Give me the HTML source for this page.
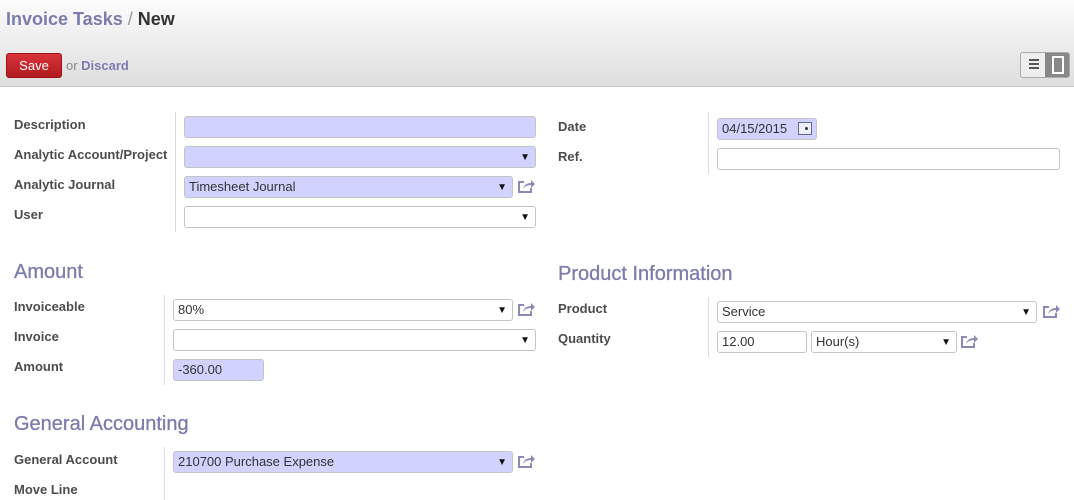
<!DOCTYPE html><html><head><style>
body{margin:0;width:1074px;height:500px;overflow:hidden;background:#fff;font-family:"Liberation Sans",sans-serif;position:relative}
.hdr{position:absolute;left:0;top:0;width:1074px;height:86px;background:linear-gradient(#fcfcfc,#dedede);border-bottom:1px solid #cacaca}
.a{position:absolute}
.lbl{position:absolute;font-size:13px;font-weight:bold;color:#4c4c4c}
.in{position:absolute;height:20px;border:1px solid #c4c4c4;border-radius:3px;background:#fff;font-size:13px;color:#333;line-height:20px;padding-left:4px;box-sizing:content-box}
.req{background:#d2d2ff}
.arr{position:absolute;right:5px;top:1px;font-size:10px;color:#111}
.sep{position:absolute;width:1px;background:#ddd}
.h{position:absolute;font-size:20px;color:#7c7bad;-webkit-text-stroke:0.3px #7c7bad}
.ic{position:absolute;width:18px;height:14px}
</style></head><body>
<div class="hdr"></div>
<div class="a" style="left:6px;top:9px;font-size:18px;font-weight:bold;color:#7c7bad">Invoice Tasks <span style="color:#999;font-weight:normal">/</span> <span style="color:#333">New</span></div>
<div class="a" style="left:6px;top:53px;width:54px;height:23px;background:linear-gradient(#d9343a,#b01a1f);border:1px solid #a01418;border-radius:3px;color:#fff;font-size:13px;line-height:23px;text-align:center">Save</div>
<div class="a" style="left:66px;top:58px;font-size:13px;color:#888">or <b style="color:#7c7bad">Discard</b></div>
<div class="a" style="left:1020px;top:52px;width:48px;height:24px;border:1px solid #aaa;border-radius:3px;background:#eee;overflow:hidden">
<div class="a" style="left:8px;top:6px;width:10px;height:2px;background:#555;box-shadow:0 4px 0 #555,0 8px 0 #555"></div>
<div class="a" style="left:24px;top:0;width:24px;height:24px;background:#888"></div>
<div class="a" style="left:31px;top:3px;width:8px;height:14px;border:2px solid #fff"></div></div>

<div class="sep" style="left:175px;top:112px;height:120px"></div>
<div class="lbl" style="left:14px;top:117px">Description</div>
<div class="lbl" style="left:14px;top:147px">Analytic Account/Project</div>
<div class="lbl" style="left:14px;top:177px">Analytic Journal</div>
<div class="lbl" style="left:14px;top:207px">User</div>
<div class="in req" style="left:184px;top:116px;width:346px"></div>
<div class="in req" style="left:184px;top:146px;width:346px"><span class="arr">▼</span></div>
<div class="in req" style="left:184px;top:176px;width:323px">Timesheet Journal<span class="arr">▼</span></div>
<div class="in" style="left:184px;top:206px;width:346px"><span class="arr">▼</span></div>

<div class="sep" style="left:708px;top:112px;height:62px"></div>
<div class="lbl" style="left:558px;top:119px">Date</div>
<div class="lbl" style="left:558px;top:149px">Ref.</div>
<div class="in req" style="left:717px;top:118px;width:94px">04/15/2015<span class="a" style="left:80px;top:3px;width:12px;height:11px;border:1px solid #668;background:#eef"><span class="a" style="left:6px;top:4px;width:3px;height:3px;background:#333;border-radius:2px"></span></span></div>
<div class="in" style="left:717px;top:148px;width:337px"></div>

<div class="h" style="left:14px;top:261px">Amount</div>
<div class="sep" style="left:164px;top:295px;height:90px"></div>
<div class="lbl" style="left:14px;top:299px">Invoiceable</div>
<div class="lbl" style="left:14px;top:329px">Invoice</div>
<div class="lbl" style="left:14px;top:359px">Amount</div>
<div class="in" style="left:173px;top:299px;width:334px">80%<span class="arr">▼</span></div>
<div class="in" style="left:173px;top:329px;width:357px"><span class="arr">▼</span></div>
<div class="in req" style="left:173px;top:359px;width:85px">-360.00</div>

<div class="h" style="left:558px;top:263px">Product Information</div>
<div class="sep" style="left:708px;top:297px;height:60px"></div>
<div class="lbl" style="left:558px;top:301px">Product</div>
<div class="lbl" style="left:558px;top:331px">Quantity</div>
<div class="in" style="left:717px;top:301px;width:314px">Service<span class="arr">▼</span></div>
<div class="in" style="left:717px;top:331px;width:84px">12.00</div>
<div class="in" style="left:811px;top:331px;width:140px">Hour(s)<span class="arr">▼</span></div>

<div class="h" style="left:14px;top:413px">General Accounting</div>
<div class="sep" style="left:164px;top:447px;height:53px"></div>
<div class="lbl" style="left:14px;top:452px">General Account</div>
<div class="lbl" style="left:14px;top:482px">Move Line</div>
<div class="in req" style="left:173px;top:451px;width:334px">210700 Purchase Expense<span class="arr">▼</span></div>

<svg width="0" height="0" style="position:absolute"><defs><g id="ex"><path d="M7 3H2v10h12V9" fill="none" stroke="#8a8ab8" stroke-width="2"/><path d="M6 10c1-4 4-6 8-6V1l4 4-4 4V6c-3 0-6 1-8 4z" fill="#8a8ab8"/></g></defs></svg>
<svg class="ic" style="left:517px;top:179px"><use href="#ex"/></svg>
<svg class="ic" style="left:517px;top:302px"><use href="#ex"/></svg>
<svg class="ic" style="left:517px;top:454px"><use href="#ex"/></svg>
<svg class="ic" style="left:1042px;top:304px"><use href="#ex"/></svg>
<svg class="ic" style="left:960px;top:334px"><use href="#ex"/></svg>
</body></html>
